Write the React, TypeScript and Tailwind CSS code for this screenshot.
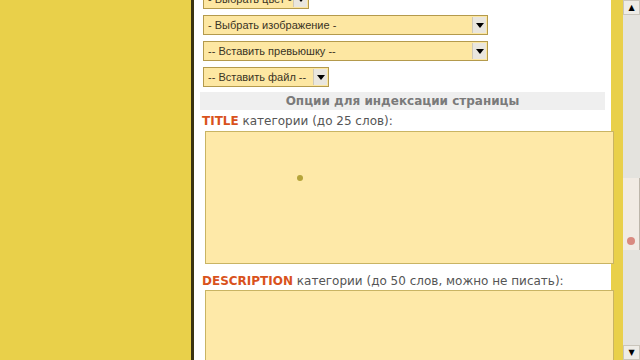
const font = { fontFamily: '"DejaVu Sans", Verdana, sans-serif' };
const selectFont = { fontFamily: '"Liberation Sans", Tahoma, Arial, sans-serif' };

function FakeSelect({ label, width }: { label: string; width: string }) {
  return (
    <div
      className={`flex h-[20px] items-stretch border border-[#b49a4c] bg-[#fde7a2] ${width}`}
    >
      <div
        className="flex flex-1 items-center pl-[4px] text-[11px] text-[#3a3424] whitespace-nowrap overflow-hidden"
        style={selectFont}
      >
        {label}
      </div>
      <div className="m-[1px] flex w-[14px] shrink-0 items-center justify-center bg-[#e9e6de] border-l border-[#cfc9b8]">
        <svg width="8" height="5" viewBox="0 0 8 5">
          <path d="M0 0h8L4 5z" fill="#000" />
        </svg>
      </div>
    </div>
  );
}

function ScrollArrow({ up }: { up?: boolean }) {
  return (
    <div className="flex h-[15px] w-[17px] shrink-0 items-center justify-center border border-[#c9c5bb] bg-[#eeece6] text-[8px] leading-none text-black">
      {up ? "▲" : "▼"}
    </div>
  );
}

export default function App() {
  return (
    <div className="flex h-[360px] w-[640px] overflow-hidden" style={font}>
      <div className="w-[191px] shrink-0 bg-[#e9d04a]" />
      <div className="w-[3px] shrink-0 bg-[#3b3412]" />
      <div className="flex w-[417px] min-w-0 shrink-0 flex-col bg-white">
        <div className="-mt-[11px] flex flex-col gap-[6px] pl-[9px]">
          <FakeSelect label="- Выбрать цвет -" width="w-[106px]" />
          <FakeSelect label="- Выбрать изображение -" width="w-[285px]" />
          <FakeSelect label="-- Вставить превьюшку --" width="w-[285px]" />
          <FakeSelect label="-- Вставить файл --" width="w-[126px]" />
        </div>
        <div className="mt-[5px] ml-[6px] flex h-[18px] w-[405px] items-center justify-center bg-[#efefef] text-[12px] font-bold text-[#7a7a7a]">
          Опции для индексации страницы
        </div>
        <div className="mt-[3px] ml-[8px] text-[12px] leading-[16px] text-[#555]">
          <span className="font-bold text-[#d9521c]">TITLE</span> категории (до 25 слов):
        </div>
        <div className="relative z-10 mt-[2px] ml-[11px] h-[133px] w-[409px] shrink-0 border border-[#c9b463] bg-[#fee9a8]">
          <div className="absolute left-[91px] top-[43px] h-[6px] w-[6px] rounded-full bg-[#b5a43a]" />
        </div>
        <div className="mt-[9px] ml-[8px] text-[12px] leading-[16px] text-[#555]">
          <span className="font-bold text-[#d9521c]">DESCRIPTION</span> категории (до 50 слов, можно не писать):
        </div>
        <div className="relative z-10 mt-[1px] ml-[11px] h-[90px] w-[409px] shrink-0 border border-[#c9b463] bg-[#fee9a8]" />
      </div>
      <div className="w-[12px] shrink-0 bg-[#e9d04a]" />
      <div className="flex w-[17px] shrink-0 flex-col bg-[#e4e3de]">
        <ScrollArrow up />
        <div className="relative mt-[163px] h-[72px] shrink-0 border-r border-[#bdb6ab] bg-[#f1ebe4]">
          <div className="absolute left-[4px] top-[59px] h-[8px] w-[8px] rounded-full bg-[#d98a80]" />
        </div>
        <div className="flex-1" />
        <ScrollArrow />
      </div>
    </div>
  );
}
